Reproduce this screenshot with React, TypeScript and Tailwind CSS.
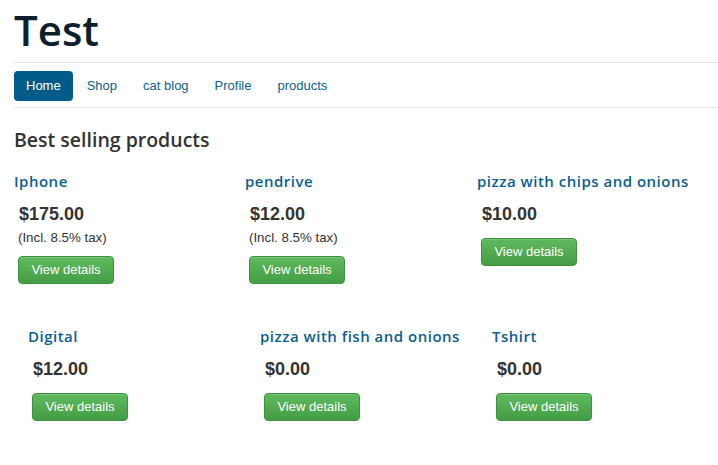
import * as React from "react";

type Product = { name: string; price: string; tax?: boolean };

const rowOne: Product[] = [
  { name: "Iphone", price: "$175.00", tax: true },
  { name: "pendrive", price: "$12.00", tax: true },
  { name: "pizza with chips and onions", price: "$10.00" },
];

const rowTwo: Product[] = [
  { name: "Digital", price: "$12.00" },
  { name: "pizza with fish and onions", price: "$0.00" },
  { name: "Tshirt", price: "$0.00" },
];

const navItems = ["Home", "Shop", "cat blog", "Profile", "products"];

const ProductCard: React.FC<{ product: Product }> = ({ product }) => (
  <div className="flex flex-col items-start">
    <h3 className="font-['Open_Sans',sans-serif] font-semibold text-[15px] leading-[20px] text-[#0b5f8f] tracking-[0.5px] whitespace-nowrap">
      {product.name}
    </h3>
    <div className="pl-[4px] pt-[13px] flex flex-col items-start">
      <p className="pl-[1px] font-['Liberation_Sans',Arial,sans-serif] font-bold text-[18px] leading-[20px] text-[#333]">
        {product.price}
      </p>
      {product.tax && (
        <p className="font-['Liberation_Sans',Arial,sans-serif] text-[13.3px] leading-[16px] text-[#333] mt-[6px]">
          (Incl. 8.5% tax)
        </p>
      )}
      <button
        className={`${product.tax ? "mt-[10px]" : "mt-[14px]"} w-[96px] h-[28px] rounded-[4px] border border-[#3e8f3e] bg-gradient-to-b from-[#5fba5f] to-[#449d44] text-white font-['Liberation_Sans',Arial,sans-serif] text-[13px] shadow-[inset_0_1px_0_rgba(255,255,255,0.15)]`}
      >
        View details
      </button>
    </div>
  </div>
);

export default function App() {
  return (
    <div className="w-[718px] h-[465px] bg-white pl-[14px] overflow-hidden">
      <h1 className="font-['Open_Sans',sans-serif] font-semibold text-[42px] leading-[56px] text-[#0c1f2c] pt-[2px]">
        Test
      </h1>
      <div className="border-t border-[#e5e5e5] mt-[4px]" />
      <nav className="flex items-center gap-[2px] pt-[8px] pb-[6px] font-['Liberation_Sans',Arial,sans-serif] text-[13px]">
        {navItems.map((item, i) => (
          <a
            key={item}
            className={
              i === 0
                ? "px-[12px] h-[30px] flex items-center rounded-[4px] bg-[#005b88] text-white"
                : "px-[12px] h-[30px] flex items-center text-[#0b5f8f]"
            }
          >
            {item}
          </a>
        ))}
      </nav>
      <div className="border-t border-[#e5e5e5]" />
      <h2 className="font-['Open_Sans',sans-serif] font-semibold text-[19.5px] leading-[28px] text-[#333] mt-[18px]">
        Best selling products
      </h2>
      <div className="grid grid-cols-[231px_232px_1fr] mt-[17px]">
        {rowOne.map((p) => (
          <ProductCard key={p.name} product={p} />
        ))}
      </div>
      <div className="grid grid-cols-[232px_232px_1fr] pl-[14px] mt-[42px]">
        {rowTwo.map((p) => (
          <ProductCard key={p.name} product={p} />
        ))}
      </div>
    </div>
  );
}
